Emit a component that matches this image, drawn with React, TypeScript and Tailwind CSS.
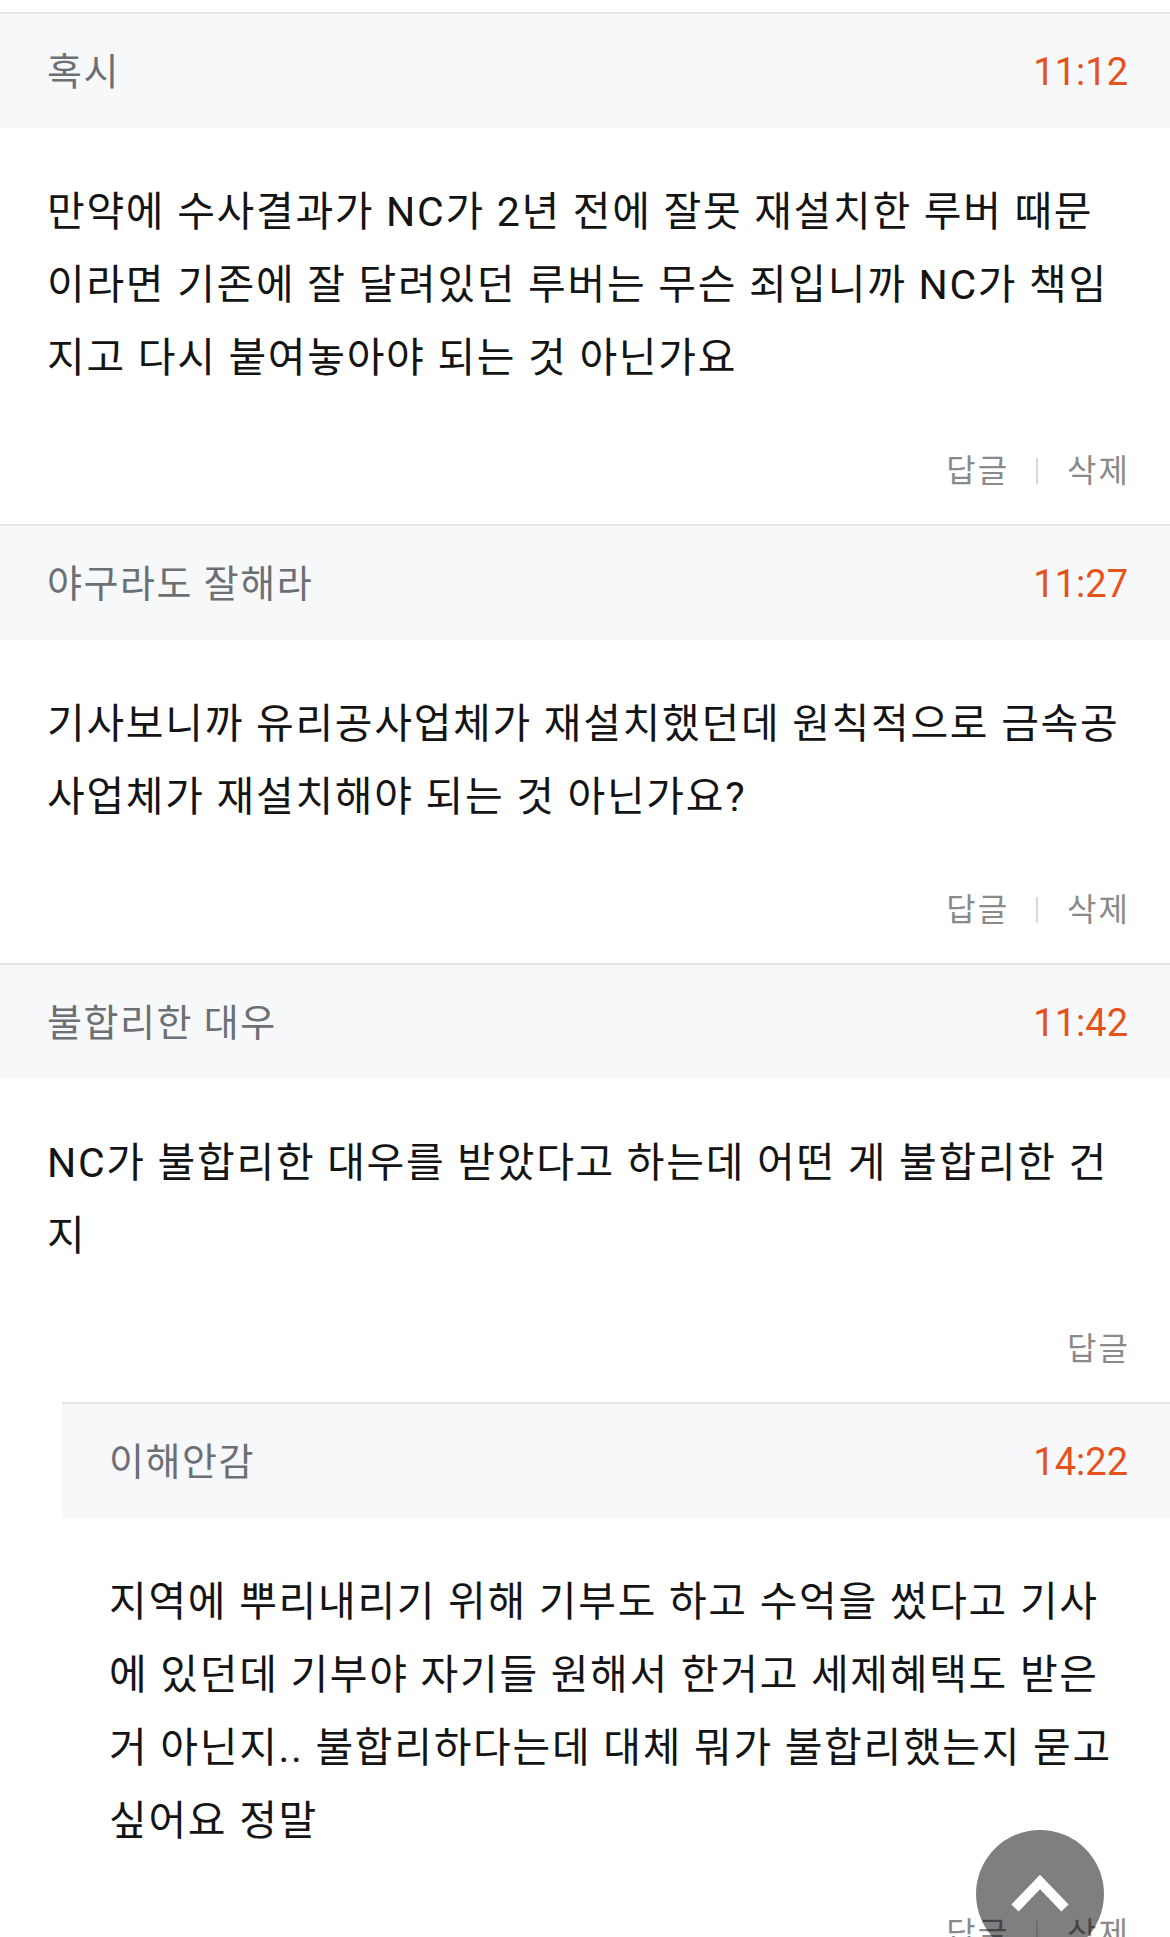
const COMMENTS = [
  {
    name: '혹시',
    time: '11:12',
    lines: [
      '만약에 수사결과가 NC가 2년 전에 잘못 재설치한 루버 때문',
      '이라면 기존에 잘 달려있던 루버는 무슨 죄입니까 NC가 책임',
      '지고 다시 붙여놓아야 되는 것 아닌가요',
    ],
    canDelete: true,
    reply: false,
  },
  {
    name: '야구라도 잘해라',
    time: '11:27',
    lines: [
      '기사보니까 유리공사업체가 재설치했던데 원칙적으로 금속공',
      '사업체가 재설치해야 되는 것 아닌가요?',
    ],
    canDelete: true,
    reply: false,
  },
  {
    name: '불합리한 대우',
    time: '11:42',
    lines: ['NC가 불합리한 대우를 받았다고 하는데 어떤 게 불합리한 건', '지'],
    canDelete: false,
    reply: false,
  },
  {
    name: '이해안감',
    time: '14:22',
    lines: [
      '지역에 뿌리내리기 위해 기부도 하고 수억을 썼다고 기사',
      '에 있던데 기부야 자기들 원해서 한거고 세제혜택도 받은',
      '거 아닌지.. 불합리하다는데 대체 뭐가 불합리했는지 묻고',
      '싶어요 정말',
    ],
    canDelete: true,
    reply: true,
  },
]

type Comment = (typeof COMMENTS)[number]

function CommentItem({ c }: { c: Comment }) {
  return (
    <div className={`border-t-2 border-[#e3e4e6] ${c.reply ? 'ml-[62px]' : ''}`}>
      {/* Header */}
      <div className="h-[114px] bg-[#f7f8fa] flex items-center justify-between pl-[47px] pr-[42px]">
        <span className="text-[38px] tracking-[1.5px] text-[#6c6f73] pt-[3px]">{c.name}</span>
        <span className="text-[38px] text-[#e5531b] pt-[3px]">{c.time}</span>
      </div>

      {/* Body */}
      <div className="pl-[47px] pr-[20px] pt-[48px] text-[41px] tracking-[1.7px] leading-[73px] text-[#141414]">
        {c.lines.map(line => (
          <div key={line} className="whitespace-nowrap">{line}</div>
        ))}
      </div>

      {/* Actions */}
      <div className="h-[40px] mt-[56px] mb-[33px] pr-[40px] flex items-center justify-end text-[32px] tracking-[2px] text-[#8a8a8a]">
        <span>답글</span>
        {c.canDelete && (
          <>
            <span className="w-[2px] h-[26px] bg-[#d8d8d8] ml-[27px] mr-[29px]" />
            <span>삭제</span>
          </>
        )}
      </div>
    </div>
  )
}

export default function App() {
  return (
    <div className="min-h-screen bg-white pt-[12px] pb-[60px] font-[Roboto,'Noto_Sans_CJK_KR',sans-serif]">
      {COMMENTS.map(c => (
        <CommentItem key={c.name} c={c} />
      ))}

      {/* Scroll to top */}
      <button className="fixed right-[66px] bottom-[-21px] w-[128px] h-[128px] rounded-full bg-black/50 flex items-center justify-center">
        <svg width="128" height="128" viewBox="0 0 128 128">
          <polyline
            points="39,78 64,52 89,78"
            fill="none"
            stroke="white"
            strokeWidth="10"
            strokeLinejoin="miter"
          />
        </svg>
      </button>
    </div>
  )
}
